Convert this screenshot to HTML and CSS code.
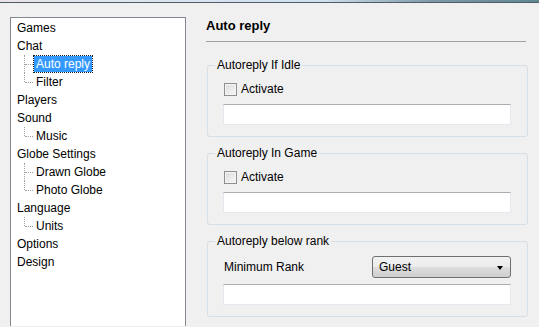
FILE: index.html
```html
<!DOCTYPE html>
<html lang="en">
<head>
  <meta charset="UTF-8">
  <title>Settings - Auto reply</title>
  <link rel="stylesheet" href="styles.css">
</head>
<body>
  <div class="titlebar"></div>
  <div class="main">
    <ul class="tree">
      <li>Games</li>
      <li>Chat
        <ul>
          <li><span class="selected">Auto reply</span></li>
          <li class="last"><span>Filter</span></li>
        </ul>
      </li>
      <li>Players</li>
      <li>Sound
        <ul>
          <li class="last"><span>Music</span></li>
        </ul>
      </li>
      <li>Globe Settings
        <ul>
          <li><span>Drawn Globe</span></li>
          <li class="last"><span>Photo Globe</span></li>
        </ul>
      </li>
      <li>Language
        <ul>
          <li class="last"><span>Units</span></li>
        </ul>
      </li>
      <li>Options</li>
      <li>Design</li>
    </ul>

    <div class="page">
      <h2 class="page-title">Auto reply</h2>

      <fieldset class="group">
        <legend>Autoreply If Idle</legend>
        <label class="check"><span class="box"></span>Activate</label>
        <div class="input"></div>
      </fieldset>

      <fieldset class="group">
        <legend>Autoreply In Game</legend>
        <label class="check"><span class="box"></span>Activate</label>
        <div class="input"></div>
      </fieldset>

      <fieldset class="group">
        <legend>Autoreply below rank</legend>
        <div class="rank-row">
          <span class="rank-label">Minimum Rank</span>
          <div class="combo">Guest<span class="arrow"></span></div>
        </div>
        <div class="input"></div>
      </fieldset>
    </div>
  </div>
</body>
</html>
```

FILE: styles.css
```css
body {
  margin: 0;
  background: #f0f0f0;
  color: #000;
  font-family: "Liberation Sans", Arial, sans-serif;
  font-size: 12px;
  height: 327px;
  overflow: hidden;
}
.titlebar {
  height: 2px;
  background: linear-gradient(to right, #e9e3e6 0%, #dfe6ee 20%, #cfe0ee 60%, #7f9aa7 80%, #5f8790 100%);
  border-bottom: 1px solid #4f5d6b;
}
.main {
  display: flex;
  padding: 14px 0 0 10px;
}

/* tree */
.tree {
  list-style: none;
  margin: 0;
  padding: 1px 0 0 6px;
  width: 168px;
  height: 307px;
  background: #fff;
  border: 1px solid #828790;
  border-bottom: none;
}
.tree li {
  line-height: 18px;
}
.tree ul {
  list-style: none;
  margin: 0;
  padding: 0;
}
.tree ul li {
  position: relative;
  padding-left: 17px;
}
.tree ul li::before {
  content: "";
  position: absolute;
  left: 7px;
  top: 0;
  bottom: 0;
  border-left: 1px dotted #a0a0a0;
}
.tree ul li.last::before {
  bottom: 9px;
}
.tree ul li::after {
  content: "";
  position: absolute;
  left: 8px;
  top: 9px;
  width: 8px;
  border-top: 1px dotted #a0a0a0;
}
.tree ul li span {
  padding: 0 2px;
}
.tree .selected {
  background: #3399ff;
  color: #fff;
  outline: 1px dotted #1a1a1a;
  padding: 1px 2px;
}

/* right page */
.page {
  margin-left: 20px;
  width: 322px;
}
.page-title {
  margin: 0;
  font-size: 13px;
  font-weight: bold;
  line-height: 17px;
  padding-bottom: 7px;
  border-bottom: 1px solid #a0a0a0;
  margin-right: 2px;
}
.group {
  margin: 9px 0 0 1px;
  padding: 0 0 11px 15px;
  border: 1px solid #d5dfe5;
  border-radius: 3px;
  min-width: 0;
}
.group:first-of-type {
  margin-top: 16px;
}
.group legend {
  padding: 0 2px;
  margin-left: -8px;
  line-height: 15px;
}
.check {
  display: flex;
  align-items: center;
  height: 18px;
  margin: 7px 0 0 1px;
}
.box {
  width: 11px;
  height: 11px;
  border: 1px solid #8f8f8f;
  background: linear-gradient(135deg, #dcdcdc, #f8f8f8);
  box-shadow: inset 0 0 0 1px #f4f4f4;
  margin-right: 4px;
}
.input {
  margin-top: 6px;
  width: 286px;
  height: 19px;
  background: #fff;
  border: 1px solid #e3e9ef;
  border-top-color: #abadb3;
}
.rank-row {
  display: flex;
  align-items: center;
  justify-content: space-between;
  margin: 7px 0 0 1px;
  width: 287px;
}
.combo {
  position: relative;
  width: 131px;
  height: 20px;
  line-height: 20px;
  padding-left: 6px;
  border: 1px solid #707070;
  border-radius: 3px;
  background: linear-gradient(#f2f2f2, #ebebeb 50%, #dddddd 51%, #cfcfcf);
}
.arrow {
  position: absolute;
  right: 7px;
  top: 9px;
  border-left: 3px solid transparent;
  border-right: 3px solid transparent;
  border-top: 4px solid #000;
}
.rank-row + .input {
  margin-top: 6px;
}
```
